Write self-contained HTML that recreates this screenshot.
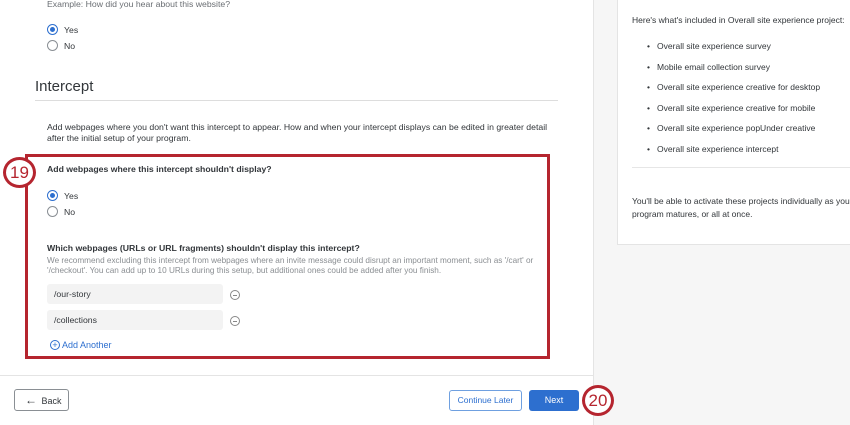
<!DOCTYPE html><html><head><style>
body{margin:0;width:850px;height:425px;overflow:hidden;font-family:"Liberation Sans",sans-serif;background:#fff;position:relative;color:#32363a}
.a{position:absolute;white-space:nowrap}
.t{font-size:8.7px;color:#32363a}
.radio{width:9px;height:9px;border:1px solid #8a8f94;border-radius:50%;background:#fff}
.radio.on{border-color:#2d6fcf}
.radio.on:after{content:"";position:absolute;left:2px;top:2px;width:5px;height:5px;border-radius:50%;background:#2d6fcf}
.inp{background:#f3f3f3;border-radius:3px;width:176px;height:20px;font-size:8.7px;line-height:20px;padding-left:7px;box-sizing:border-box;color:#32363a}
.minus{width:8px;height:8px;border:1px solid #888;border-radius:50%}
.minus:after{content:"";position:absolute;left:2px;top:3.5px;width:4px;height:1px;background:#888}
.circ{border:3px solid #b5252f;border-radius:50%;background:#fff;color:#b5252f;font-size:17px;text-align:center;box-sizing:border-box}
</style></head><body>
<div class="a" style="left:593px;top:0;width:257px;height:425px;background:#f6f6f6;border-left:1px solid #e4e4e4"></div>
<div class="a" style="left:617px;top:0;width:233px;height:244px;background:#fff;border:1px solid #e4e4e4;border-top:none;border-right:none"></div>
<div class="a t" style="left:632px;top:15px;font-size:8.5px">Here's what's included in Overall site experience project:</div>
<div class="a t" style="left:647px;top:36px;line-height:20.5px;font-size:8.5px">
•&nbsp;&nbsp; Overall site experience survey<br>•&nbsp;&nbsp; Mobile email collection survey<br>•&nbsp;&nbsp; Overall site experience creative for desktop<br>•&nbsp;&nbsp; Overall site experience creative for mobile<br>•&nbsp;&nbsp; Overall site experience popUnder creative<br>•&nbsp;&nbsp; Overall site experience intercept</div>
<div class="a" style="left:632px;top:167px;width:218px;height:1px;background:#e6e6e6"></div>
<div class="a t" style="left:632px;top:195px;line-height:13px;font-size:8.5px">You'll be able to activate these projects individually as your<br>program matures, or all at once.</div>

<div class="a t" style="left:47px;top:-1px;color:#6a6e73">Example: How did you hear about this website?</div>
<div class="a radio on" style="left:47px;top:24px"></div><div class="a t" style="left:64px;top:25px">Yes</div>
<div class="a radio" style="left:47px;top:40px"></div><div class="a t" style="left:64px;top:41px">No</div>
<div class="a" style="left:35px;top:78px;font-size:15px;color:#32363a">Intercept</div>
<div class="a" style="left:35px;top:100px;width:523px;height:1px;background:#ddd"></div>
<div class="a t" style="left:47px;top:122px;line-height:10.5px">Add webpages where you don't want this intercept to appear. How and when your intercept displays can be edited in greater detail<br>after the initial setup of your program.</div>
<div class="a" style="left:25px;top:154px;width:525px;height:205px;border:3px solid #b5252f;box-sizing:border-box"></div>
<div class="a circ" style="left:3px;top:157px;width:33px;height:31px;line-height:25px">19</div>
<div class="a t" style="left:47px;top:164px;font-weight:bold">Add webpages where this intercept shouldn't display?</div>
<div class="a radio on" style="left:47px;top:190px"></div><div class="a t" style="left:64px;top:191px">Yes</div>
<div class="a radio" style="left:47px;top:206px"></div><div class="a t" style="left:64px;top:207px">No</div>
<div class="a t" style="left:47px;top:243px;font-weight:bold">Which webpages (URLs or URL fragments) shouldn't display this intercept?</div>
<div class="a t" style="left:47px;top:256px;line-height:10px;color:#8a8e92;font-size:8.2px">We recommend excluding this intercept from webpages where an invite message could disrupt an important moment, such as '/cart' or<br>'/checkout'. You can add up to 10 URLs during this setup, but additional ones could be added after you finish.</div>
<div class="a inp" style="left:47px;top:284px">/our-story</div>
<div class="a minus" style="left:230px;top:290px"></div>
<div class="a inp" style="left:47px;top:310px">/collections</div>
<div class="a minus" style="left:230px;top:316px"></div>
<div class="a" style="left:50px;top:340px;width:8px;height:8px;border:1px solid #2d6fcf;border-radius:50%;color:#2d6fcf;font-size:9px;line-height:8px;text-align:center">+</div>
<div class="a" style="left:62px;top:340px;font-size:9px;color:#2d6fcf">Add Another</div>
<div class="a" style="left:0;top:375px;width:593px;height:1px;background:#e4e4e4"></div>
<div class="a" style="left:14px;top:389px;width:55px;height:22px;border:1px solid #8a8f94;border-radius:3px;box-sizing:border-box;font-size:9px;line-height:20px;color:#32363a"><span style="margin-left:10px;font-size:12px">&#8592;</span> <span style="margin-left:2px">Back</span></div>
<div class="a" style="left:449px;top:390px;width:73px;height:21px;border:1px solid #6fa0e0;border-radius:3px;box-sizing:border-box;font-size:8.5px;line-height:19px;text-align:center;color:#2d6fcf">Continue Later</div>
<div class="a" style="left:529px;top:390px;width:50px;height:21px;background:#2d6fcf;border-radius:3px;font-size:9px;line-height:21px;text-align:center;color:#fff">Next</div>
<div class="a circ" style="left:582px;top:385px;width:32px;height:31px;line-height:25px">20</div>
</body></html>
